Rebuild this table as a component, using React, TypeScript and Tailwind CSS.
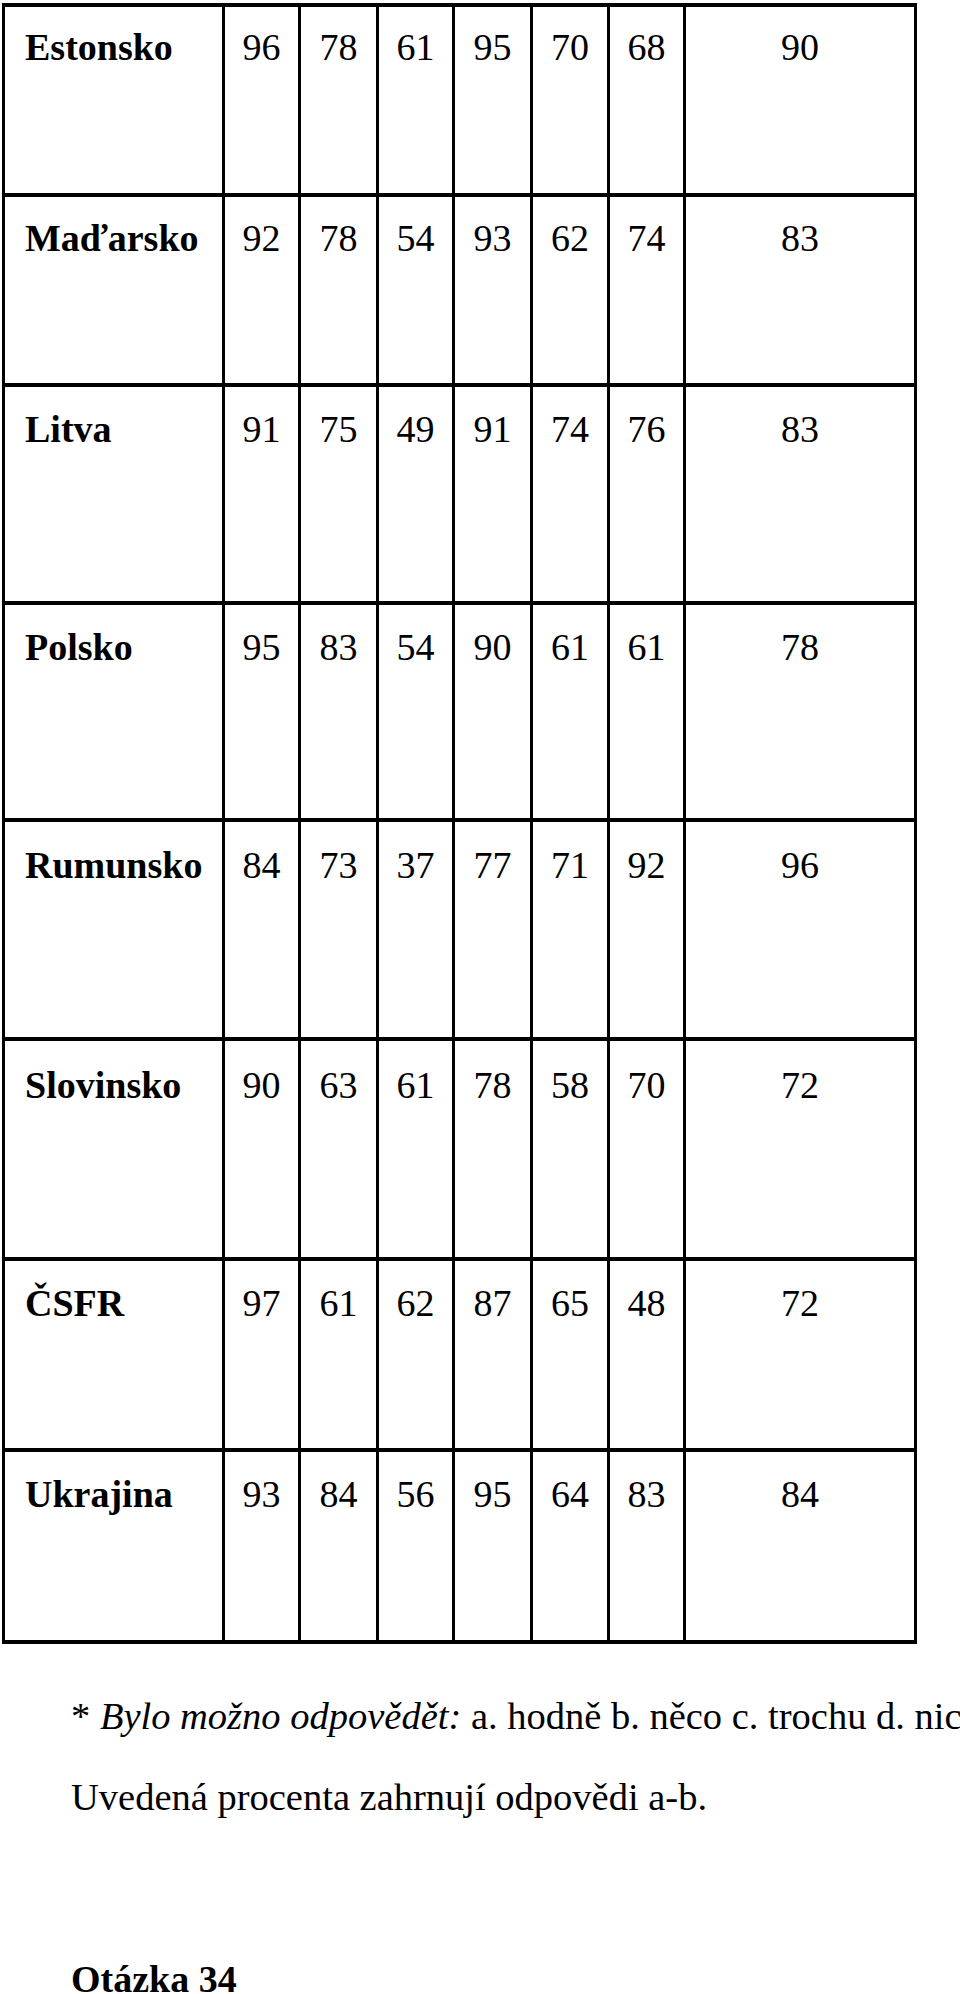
const rows: { name: string; values: number[]; h: string; pt: string }[] = [
  { name: 'Estonsko', values: [96, 78, 61, 95, 70, 68, 90], h: 'h-[186px]', pt: 'pt-[18px]' },
  { name: 'Maďarsko', values: [92, 78, 54, 93, 62, 74, 83], h: 'h-[190px]', pt: 'pt-[19px]' },
  { name: 'Litva', values: [91, 75, 49, 91, 74, 76, 83], h: 'h-[218px]', pt: 'pt-[20px]' },
  { name: 'Polsko', values: [95, 83, 54, 90, 61, 61, 78], h: 'h-[217px]', pt: 'pt-[20px]' },
  { name: 'Rumunsko', values: [84, 73, 37, 77, 71, 92, 96], h: 'h-[219px]', pt: 'pt-[21px]' },
  { name: 'Slovinsko', values: [90, 63, 61, 78, 58, 70, 72], h: 'h-[220px]', pt: 'pt-[22px]' },
  { name: 'ČSFR', values: [97, 61, 62, 87, 65, 48, 72], h: 'h-[191px]', pt: 'pt-[20px]' },
  { name: 'Ukrajina', values: [93, 84, 56, 95, 64, 83, 84], h: 'h-[192px]', pt: 'pt-[20px]' },
];

// widths include the 3px left rule of each cell
const colWidths = ['w-[76px]', 'w-[78px]', 'w-[76px]', 'w-[78px]', 'w-[77px]', 'w-[76px]', 'w-[231px]'];

export default function App() {
  return (
    <div className="min-h-[1994px] bg-white text-black font-['Liberation_Serif','Times_New_Roman',serif] text-[38px] leading-[44px] overflow-hidden">
      {/* Table */}
      <div className="ml-[2px] mt-[3px] w-[915px] border-x-[3px] border-y-4 border-black">
        {rows.map((row, i) => (
          <div key={row.name} className={`flex ${row.h} ${i > 0 ? 'border-t-4 border-black' : ''}`}>
            <div className={`w-[217px] shrink-0 pl-[20px] ${row.pt} font-bold`}>{row.name}</div>
            {row.values.map((v, j) => (
              <div key={j} className={`${colWidths[j]} shrink-0 border-l-[3px] border-black ${row.pt} text-center`}>
                {v}
              </div>
            ))}
          </div>
        ))}
      </div>

      {/* Notes */}
      <div className="ml-[71px] mt-[50px] whitespace-nowrap text-[38.5px]">
        * <span className="italic">Bylo možno odpovědět:</span> a. hodně b. něco c. trochu d. nic
      </div>
      <div className="ml-[71px] mt-[37px] whitespace-nowrap text-[38.5px]">Uvedená procenta zahrnují odpovědi a-b.</div>
      <div className="ml-[71px] mt-[138px] font-bold whitespace-nowrap">Otázka 34</div>
    </div>
  );
}
